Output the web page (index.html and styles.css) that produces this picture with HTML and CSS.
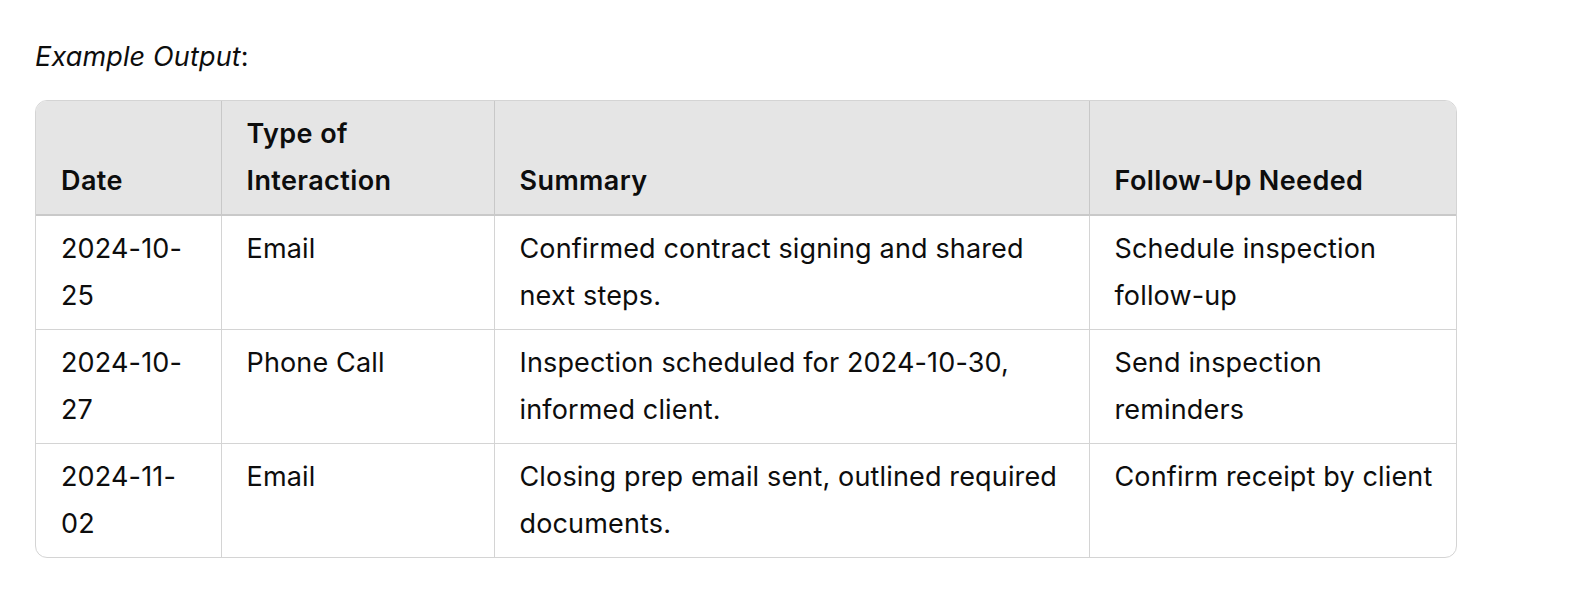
FILE: index.html
```html
<!DOCTYPE html>
<html lang="en">
<head>
<meta charset="utf-8">
<title>Example Output</title>
<link rel="stylesheet" href="styles.css">
</head>
<body>
<div class="page">
  <p class="intro"><em>Example Output</em>:</p>
  <div class="table-wrap">
    <table class="log">
      <colgroup>
        <col class="c-date">
        <col class="c-type">
        <col class="c-summary">
        <col class="c-follow">
      </colgroup>
      <thead>
        <tr>
          <th>Date</th>
          <th>Type of Interaction</th>
          <th>Summary</th>
          <th>Follow-Up Needed</th>
        </tr>
      </thead>
      <tbody>
        <tr>
          <td>2024-10-25</td>
          <td>Email</td>
          <td>Confirmed contract signing and shared next steps.</td>
          <td>Schedule inspection follow-up</td>
        </tr>
        <tr>
          <td>2024-10-27</td>
          <td>Phone Call</td>
          <td>Inspection scheduled for 2024-10-30, informed client.</td>
          <td>Send inspection reminders</td>
        </tr>
        <tr>
          <td>2024-11-02</td>
          <td>Email</td>
          <td>Closing prep email sent, outlined required documents.</td>
          <td>Confirm receipt by client</td>
        </tr>
      </tbody>
    </table>
  </div>
</div>
</body>
</html>
```

FILE: styles.css
```css
* { box-sizing: border-box; }
html, body {
  margin: 0;
  padding: 0;
  background: #ffffff;
}
body {
  font-family: Inter, "Noto Sans", "Liberation Sans", sans-serif;
  font-size: 27px;
  line-height: 47px;
  letter-spacing: 0.15px;
  color: #0d0d0d;
}
.page {
  padding: 33px 0 0 35px;
}
.intro {
  margin: 0 0 20px 0;
}
.intro em {
  font-style: italic;
}
.table-wrap {
  width: 1422px;
  border: 1px solid #d4d4d4;
  border-radius: 12px;
  overflow: hidden;
}
.log {
  width: 100%;
  border-collapse: collapse;
  table-layout: fixed;
}
.c-date { width: 185px; }
.c-type { width: 273px; }
.c-summary { width: 595px; }
.c-follow { width: auto; }
.log th,
.log td {
  text-align: left;
  padding: 9px 20px 10px 25px;
  border-left: 1px solid #d4d4d4;
  border-top: 1px solid #d4d4d4;
}
.log th:first-child,
.log td:first-child { border-left: none; }
.log thead th {
  border-top: none;
  background: #e5e5e5;
  font-weight: 600;
  letter-spacing: 0.4px;
  vertical-align: bottom;
  border-left-color: #c8c8c8;
  border-bottom: 2px solid #c9c9c9;
}
.log td {
  vertical-align: top;
  font-weight: 400;
}
.log tbody tr:first-child td { border-top: none; }
```
